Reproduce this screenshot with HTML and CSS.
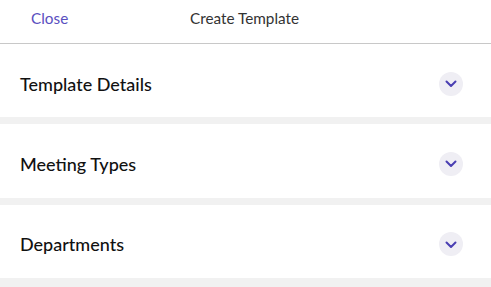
FILE: index.html
```html
<!DOCTYPE html>
<html>
<head>
<meta charset="utf-8">
<link rel="stylesheet" href="styles.css">
</head>
<body>
<div class="page">
  <header class="topbar">
    <a class="close">Close</a>
    <span class="title">Create Template</span>
  </header>
  <div class="sections">
    <section class="panel">
      <h2 class="panel-title">Template Details</h2>
      <span class="toggle"><svg width="12" height="8" viewBox="0 0 12 8"><path d="M1.5 1.5 L6 6 L10.5 1.5" fill="none" stroke="#4a3fb2" stroke-width="2" stroke-linecap="round" stroke-linejoin="round"/></svg></span>
    </section>
    <section class="panel">
      <h2 class="panel-title">Meeting Types</h2>
      <span class="toggle"><svg width="12" height="8" viewBox="0 0 12 8"><path d="M1.5 1.5 L6 6 L10.5 1.5" fill="none" stroke="#4a3fb2" stroke-width="2" stroke-linecap="round" stroke-linejoin="round"/></svg></span>
    </section>
    <section class="panel">
      <h2 class="panel-title">Departments</h2>
      <span class="toggle"><svg width="12" height="8" viewBox="0 0 12 8"><path d="M1.5 1.5 L6 6 L10.5 1.5" fill="none" stroke="#4a3fb2" stroke-width="2" stroke-linecap="round" stroke-linejoin="round"/></svg></span>
    </section>
  </div>
</div>
</body>
</html>
```
FILE: styles.css
```css
* { box-sizing: border-box; }
html, body { margin: 0; padding: 0; }
body {
  font-family: Lato, "Open Sans", Arial, sans-serif;
  background: #f1f1f1;
  width: 491px;
  height: 287px;
  overflow: hidden;
}
.topbar {
  height: 44px;
  background: #fff;
  border-bottom: 1px solid #c8c8c8;
  display: flex;
  align-items: center;
  padding: 0 0 7px 31px;
  font-size: 15.3px;
}
.close {
  color: #5a4fc0;
  width: 159px;
}
.title {
  color: #333;
}
.sections {
  display: flex;
  flex-direction: column;
  gap: 7px;
}
.panel {
  height: 73.33px;
  background: #fff;
  display: flex;
  align-items: center;
  justify-content: space-between;
  padding: 6px 28px 0 20px;
}
.panel-title {
  margin: 0;
  font-size: 18px;
  font-weight: 500;
  color: #111;
}
.toggle {
  width: 24px;
  height: 24px;
  border-radius: 50%;
  background: #efeef4;
  display: flex;
  align-items: center;
  justify-content: center;
  padding-top: 1px;
}
```
